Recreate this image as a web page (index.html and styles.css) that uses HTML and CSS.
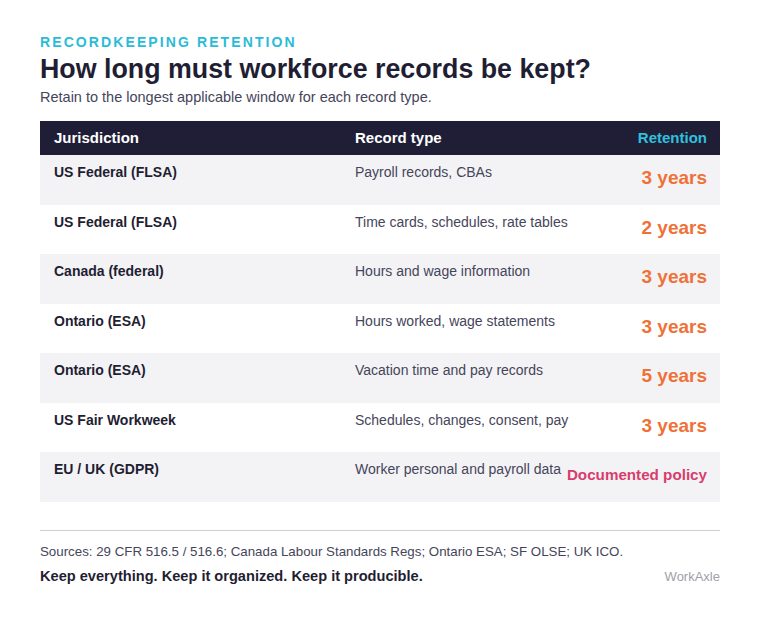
FILE: index.html
```html
<!DOCTYPE html>
<html lang="en">
<head>
<meta charset="utf-8">
<title>Recordkeeping retention</title>
<link rel="stylesheet" href="styles.css">
</head>
<body>
<main class="page">
  <header class="intro">
    <div class="eyebrow">RECORDKEEPING RETENTION</div>
    <h1 class="title">How long must workforce records be kept?</h1>
    <p class="subtitle">Retain to the longest applicable window for each record type.</p>
  </header>

  <section class="table">
    <div class="row head">
      <div class="cell juris">Jurisdiction</div>
      <div class="cell type">Record type</div>
      <div class="cell ret">Retention</div>
    </div>
    <div class="row shade">
      <div class="cell juris">US Federal (FLSA)</div>
      <div class="cell type">Payroll records, CBAs</div>
      <div class="cell ret">3 years</div>
    </div>
    <div class="row">
      <div class="cell juris">US Federal (FLSA)</div>
      <div class="cell type">Time cards, schedules, rate tables</div>
      <div class="cell ret">2 years</div>
    </div>
    <div class="row shade">
      <div class="cell juris">Canada (federal)</div>
      <div class="cell type">Hours and wage information</div>
      <div class="cell ret">3 years</div>
    </div>
    <div class="row">
      <div class="cell juris">Ontario (ESA)</div>
      <div class="cell type">Hours worked, wage statements</div>
      <div class="cell ret">3 years</div>
    </div>
    <div class="row shade">
      <div class="cell juris">Ontario (ESA)</div>
      <div class="cell type">Vacation time and pay records</div>
      <div class="cell ret">5 years</div>
    </div>
    <div class="row">
      <div class="cell juris">US Fair Workweek</div>
      <div class="cell type">Schedules, changes, consent, pay</div>
      <div class="cell ret">3 years</div>
    </div>
    <div class="row shade">
      <div class="cell juris">EU / UK (GDPR)</div>
      <div class="cell type">Worker personal and payroll data</div>
      <div class="cell ret policy">Documented policy</div>
    </div>
  </section>

  <footer class="foot">
    <p class="sources">Sources: 29 CFR 516.5 / 516.6; Canada Labour Standards Regs; Ontario ESA; SF OLSE; UK ICO.</p>
    <div class="foot-line">
      <span class="tagline">Keep everything. Keep it organized. Keep it producible.</span>
      <span class="brand">WorkAxle</span>
    </div>
  </footer>
</main>
</body>
</html>
```
FILE: styles.css
```css
* { box-sizing: border-box; }
html, body { margin: 0; padding: 0; background: #ffffff; }
body {
  font-family: "Liberation Sans", Arial, Helvetica, sans-serif;
  color: #1f1e33;
}
.page {
  width: 760px;
  padding: 33px 40px 0 40px;
}
.eyebrow {
  font-size: 14px;
  font-weight: bold;
  letter-spacing: 2.1px;
  color: #2bbbd8;
  line-height: 18px;
}
.title {
  margin: 3px 0 0 0;
  font-size: 26.8px;
  font-weight: bold;
  line-height: 30px;
  color: #1f1e33;
}
.subtitle {
  margin: 4px 0 0 0;
  font-size: 14.5px;
  line-height: 18px;
  color: #45455a;
}
.table {
  margin-top: 15px;
  display: flex;
  flex-direction: column;
}
.row {
  display: grid;
  grid-template-columns: 301px 212px 167px;
  height: 49.5px;
  align-items: start;
  padding-top: 8px;
}
.row.shade { background: #f3f3f5; }
.row.head {
  background: #1f1e36;
  height: 34px;
  padding-top: 0;
  align-items: center;
}
.cell { font-size: 14px; line-height: 18px; }
.juris { padding-left: 14px; font-weight: bold; color: #1f1e33; }
.type { padding-left: 14px; color: #45455a; white-space: nowrap; }
.ret {
  text-align: right;
  padding-right: 13px;
  font-size: 19px;
  line-height: 26px;
  padding-top: 2px;
  font-weight: bold;
  color: #f07137;
}
.ret.policy {
  font-size: 15.2px;
  color: #d83c6e;
  padding-top: 2px;
  white-space: nowrap;
}
.head .cell {
  font-size: 15px;
  font-weight: bold;
  color: #ffffff;
  line-height: 20px;
  padding-top: 0;
}
.head .ret { color: #2fc0dd; }
.foot {
  margin-top: 28px;
  border-top: 1px solid #cfcfd3;
  padding-top: 12px;
}
.sources {
  margin: 0;
  font-size: 13.3px;
  line-height: 18px;
  color: #45455a;
}
.foot-line {
  margin-top: 7px;
  display: flex;
  justify-content: space-between;
  align-items: baseline;
}
.tagline {
  font-size: 14.6px;
  font-weight: bold;
  color: #1f1e33;
}
.brand {
  font-size: 13px;
  color: #a0a0a8;
}
```
